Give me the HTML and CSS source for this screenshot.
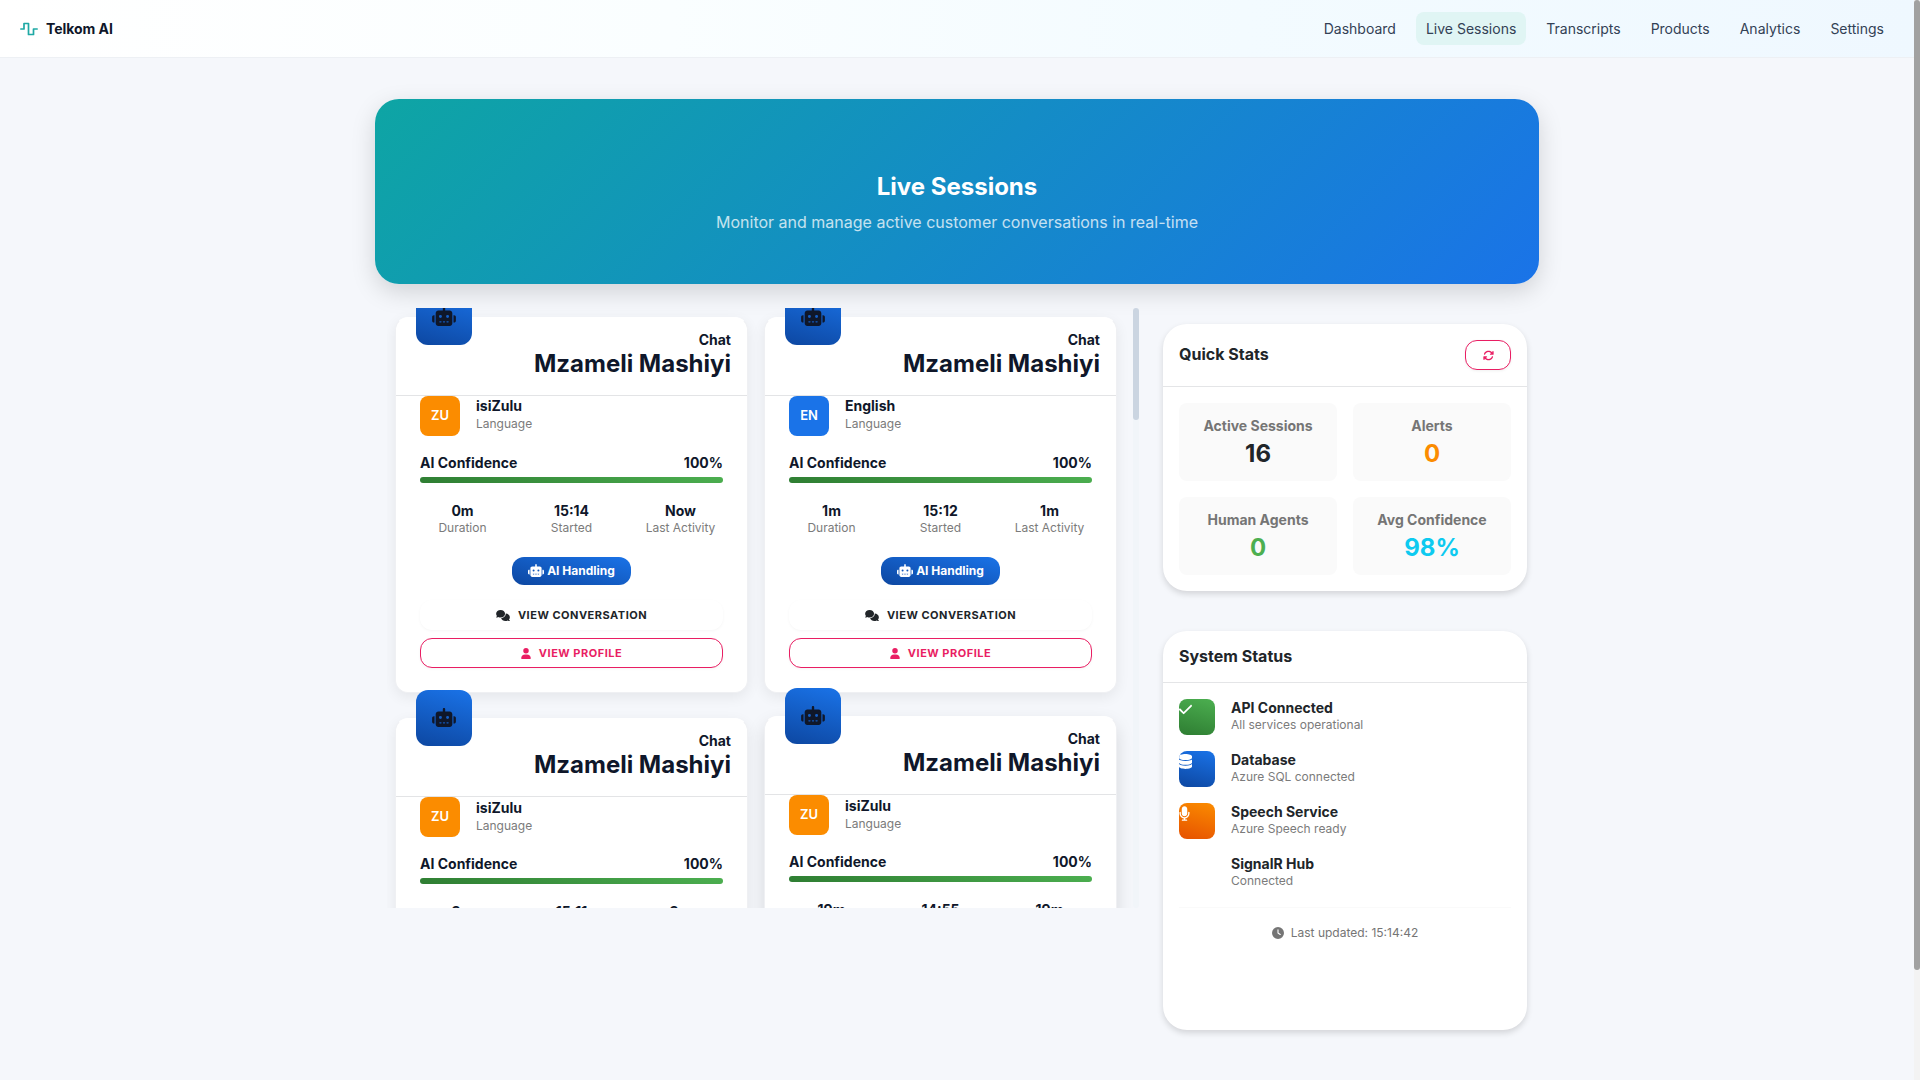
FILE: index.html
```html
<!DOCTYPE html>
<html lang="en">
<head>
<meta charset="utf-8">
<title>Telkom AI - Live Sessions</title>
<link rel="stylesheet" href="styles.css">
</head>
<body>
<svg class="sprite" aria-hidden="true">
  <symbol id="robot" viewBox="0 0 640 512"><path fill-rule="evenodd" d="M320 0c17.7 0 32 14.3 32 32V96H472c39.8 0 72 32.2 72 72V440c0 39.8-32.2 72-72 72H168c-39.8 0-72-32.2-72-72V168c0-39.8 32.2-72 72-72H288V32c0-17.7 14.3-32 32-32zM208 384c-8.8 0-16 7.2-16 16s7.2 16 16 16h32c8.8 0 16-7.2 16-16s-7.2-16-16-16H208zm96 0c-8.8 0-16 7.2-16 16s7.2 16 16 16h32c8.8 0 16-7.2 16-16s-7.2-16-16-16H304zm96 0c-8.8 0-16 7.2-16 16s7.2 16 16 16h32c8.8 0 16-7.2 16-16s-7.2-16-16-16H400zM264 256a40 40 0 1 0 -80 0 40 40 0 1 0 80 0zm152 40a40 40 0 1 0 0-80 40 40 0 1 0 0 80zM48 224H64V416H48c-26.5 0-48-21.5-48-48V272c0-26.5 21.5-48 48-48zm544 0c26.5 0 48 21.5 48 48v96c0 26.5-21.5 48-48 48H576V224h16z"/></symbol>
  <symbol id="comments" viewBox="0 0 640 512"><path d="M208 352c114.9 0 208-78.8 208-176S322.9 0 208 0S0 78.8 0 176c0 38.6 14.7 74.3 39.6 103.4c-3.5 9.4-8.7 17.7-14.2 24.7c-4.8 6.2-9.7 11-13.3 14.3c-1.8 1.6-3.3 2.9-4.3 3.7c-.5 .4-.9 .7-1.1 .8l-.2 .2C1 327.2-1.4 334.4 .8 340.9S9.1 352 16 352c21.8 0 43.8-5.6 62.1-12.5c9.2-3.5 17.8-7.4 25.3-11.4C134.1 343.3 169.8 352 208 352zM448 176c0 112.3-99.1 196.9-216.5 207C255.8 457.4 336.4 512 432 512c38.2 0 73.9-8.7 104.7-23.9c7.5 4 16 7.9 25.2 11.4c18.3 6.9 40.3 12.5 62.1 12.5c6.9 0 13.1-4.5 15.2-11.1c2.1-6.6-.2-13.8-5.8-17.9l-.2-.2c-.2-.2-.6-.4-1.1-.8c-1-.8-2.5-2-4.3-3.7c-3.6-3.3-8.5-8.1-13.3-14.3c-5.5-7-10.7-15.4-14.2-24.7c24.9-29 39.6-64.7 39.6-103.4c0-92.8-84.9-168.9-192.6-175.5c.4 5.1 .6 10.3 .6 15.5z"/></symbol>
  <symbol id="user" viewBox="0 0 448 512"><path d="M224 256A128 128 0 1 0 224 0a128 128 0 1 0 0 256zm-45.7 48C79.8 304 0 383.8 0 482.3C0 498.7 13.3 512 29.7 512H418.3c16.4 0 29.7-13.3 29.7-29.7C448 383.8 368.2 304 269.7 304H178.3z"/></symbol>
  <symbol id="check" viewBox="0 0 448 512"><path d="M438.6 105.4c12.5 12.5 12.5 32.8 0 45.3l-256 256c-12.5 12.5-32.8 12.5-45.3 0l-128-128c-12.5-12.5-12.5-32.8 0-45.3s32.8-12.5 45.3 0L160 338.7 393.4 105.4c12.5-12.5 32.8-12.5 45.3 0z"/></symbol>
  <symbol id="database" viewBox="0 0 448 512"><path d="M448 80v48c0 44.2-100.3 80-224 80S0 172.2 0 128V80C0 35.8 100.3 0 224 0S448 35.8 448 80zM393.2 214.7c20.8-7.4 39.9-16.9 54.8-28.6V288c0 44.2-100.3 80-224 80S0 332.2 0 288V186.1c14.9 11.8 34 21.2 54.8 28.6C99.7 230.7 159.5 240 224 240s124.3-9.3 169.2-25.3zM0 346.1c14.9 11.8 34 21.2 54.8 28.6C99.7 390.7 159.5 400 224 400s124.3-9.3 169.2-25.3c20.8-7.4 39.9-16.9 54.8-28.6V432c0 44.2-100.3 80-224 80S0 476.2 0 432V346.1z"/></symbol>
  <symbol id="mic" viewBox="0 0 384 512"><path d="M192 0C139 0 96 43 96 96V256c0 53 43 96 96 96s96-43 96-96V96c0-53-43-96-96-96zM64 216c0-13.3-10.7-24-24-24s-24 10.7-24 24v40c0 89.1 66.2 162.7 152 174.4V464H120c-13.3 0-24 10.7-24 24s10.7 24 24 24h72 72c13.3 0 24-10.7 24-24s-10.7-24-24-24H216V430.4c85.8-11.7 152-85.3 152-174.4V216c0-13.3-10.7-24-24-24s-24 10.7-24 24v40c0 70.7-57.3 128-128 128s-128-57.3-128-128V216z"/></symbol>
  <symbol id="clock" viewBox="0 0 512 512"><path fill-rule="evenodd" d="M256 0a256 256 0 1 1 0 512A256 256 0 1 1 256 0zM232 120V256c0 8 4 15.5 10.7 20l96 64c11 7.4 25.9 4.4 33.3-6.7s4.4-25.9-6.7-33.3L280 243.2V120c0-13.3-10.7-24-24-24s-24 10.7-24 24z"/></symbol>
  <symbol id="sync" viewBox="0 0 512 512"><path d="M105.1 202.6c7.7-21.8 20.2-42.3 37.8-59.8c62.5-62.5 163.8-62.5 226.3 0L386.3 160H352c-17.7 0-32 14.3-32 32s14.3 32 32 32H463.9c17.7 0 32-14.3 32-32V80c0-17.7-14.3-32-32-32s-32 14.3-32 32v35.2L414.4 97.6c-87.5-87.5-229.3-87.5-316.8 0C73.2 122 55.6 150.7 44.8 181.4c-5.9 16.7 2.9 34.9 19.5 40.8s34.9-2.9 40.8-19.5zM39 289.3c-5 1.5-9.8 4.2-13.7 8.2c-4 4-6.7 8.8-8.1 14c-.3 1.2-.6 2.5-.8 3.8c-.3 1.7-.4 3.4-.4 5.1V432c0 17.7 14.3 32 32 32s32-14.3 32-32V396.9l17.6 17.5c87.5 87.4 229.3 87.4 316.7 0c24.4-24.4 42.1-53.1 52.9-83.7c5.9-16.7-2.9-34.9-19.5-40.8s-34.9 2.9-40.8 19.5c-7.7 21.8-20.2 42.3-37.8 59.8c-62.5 62.5-163.8 62.5-226.3 0l-.1-.1L125.6 352H160c17.7 0 32-14.3 32-32s-14.3-32-32-32H48.4c-1.6 0-3.2 .1-4.8 .3s-3.1 .5-4.6 1z"/></symbol>
</svg>

<header class="topbar">
  <div class="brand">
    <svg class="logo" viewBox="0 0 18 14"><path d="M.8 7H4V1.500h4.500v11h5V7h3.700" fill="none" stroke="#1fa9a5" stroke-width="1.700" stroke-linejoin="round" stroke-linecap="round"/></svg>
    <span>Telkom AI</span>
  </div>
  <nav class="nav">
    <a>Dashboard</a><a class="active">Live Sessions</a><a>Transcripts</a><a>Products</a><a>Analytics</a><a>Settings</a>
  </nav>
</header>

<main class="page">
  <section class="hero">
    <h1>Live Sessions</h1>
    <p>Monitor and manage active customer conversations in real-time</p>
  </section>

  <div class="columns">
    <div class="list-wrap">
      <div class="list">
        <div class="list-col">
          <article class="card">
            <div class="card-head"><div class="avatar"><svg class="i-robot"><use href="#robot"/></svg></div><p>Chat</p><h4>Mzameli Mashiyi</h4></div>
            <div class="card-body">
              <div class="lang"><span class="code">ZU</span><div><h6>isiZulu</h6><small>Language</small></div></div>
              <div class="conf"><span>AI Confidence</span><span>100%</span></div>
              <div class="bar"></div>
              <div class="facts"><div><b>0m</b><small>Duration</small></div><div><b>15:14</b><small>Started</small></div><div><b>Now</b><small>Last Activity</small></div></div>
              <span class="pill"><svg class="i-pill"><use href="#robot"/></svg>AI Handling</span>
              <button class="btn"><svg class="i-comments"><use href="#comments"/></svg>View Conversation</button>
              <button class="btn outline"><svg class="i-user"><use href="#user"/></svg>View Profile</button>
            </div>
          </article>
          <article class="card next">
            <div class="card-head"><div class="avatar"><svg class="i-robot"><use href="#robot"/></svg></div><p>Chat</p><h4>Mzameli Mashiyi</h4></div>
            <div class="card-body">
              <div class="lang"><span class="code">ZU</span><div><h6>isiZulu</h6><small>Language</small></div></div>
              <div class="conf"><span>AI Confidence</span><span>100%</span></div>
              <div class="bar"></div>
              <div class="facts"><div><b>3m</b></div><div><b>15:11</b></div><div><b>3m</b></div></div>
            </div>
          </article>
        </div>
        <div class="list-col tight">
          <article class="card">
            <div class="card-head"><div class="avatar"><svg class="i-robot"><use href="#robot"/></svg></div><p>Chat</p><h4>Mzameli Mashiyi</h4></div>
            <div class="card-body">
              <div class="lang"><span class="code en">EN</span><div><h6>English</h6><small>Language</small></div></div>
              <div class="conf"><span>AI Confidence</span><span>100%</span></div>
              <div class="bar"></div>
              <div class="facts"><div><b>1m</b><small>Duration</small></div><div><b>15:12</b><small>Started</small></div><div><b>1m</b><small>Last Activity</small></div></div>
              <span class="pill"><svg class="i-pill"><use href="#robot"/></svg>AI Handling</span>
              <button class="btn"><svg class="i-comments"><use href="#comments"/></svg>View Conversation</button>
              <button class="btn outline"><svg class="i-user"><use href="#user"/></svg>View Profile</button>
            </div>
          </article>
          <article class="card next raised">
            <div class="card-head"><div class="avatar"><svg class="i-robot"><use href="#robot"/></svg></div><p>Chat</p><h4>Mzameli Mashiyi</h4></div>
            <div class="card-body">
              <div class="lang"><span class="code">ZU</span><div><h6>isiZulu</h6><small>Language</small></div></div>
              <div class="conf"><span>AI Confidence</span><span>100%</span></div>
              <div class="bar"></div>
              <div class="facts"><div><b>19m</b></div><div><b>14:55</b></div><div><b>19m</b></div></div>
            </div>
          </article>
        </div>
      </div>
      <div class="list-track"><div class="list-thumb"></div></div>
    </div>

    <aside class="side">
      <section class="panel">
        <div class="panel-head quick"><h5>Quick Stats</h5><button class="refresh"><svg class="i-sync"><use href="#sync"/></svg></button></div>
        <div class="stats">
          <div class="stat"><p>Active Sessions</p><strong>16</strong></div>
          <div class="stat"><p>Alerts</p><strong class="orange">0</strong></div>
          <div class="stat"><p>Human Agents</p><strong class="green">0</strong></div>
          <div class="stat"><p>Avg Confidence</p><strong class="cyan">98%</strong></div>
        </div>
      </section>
      <section class="panel status">
        <div class="panel-head"><h5>System Status</h5></div>
        <div class="services">
          <div class="service"><span class="box ok"><svg><use href="#check"/></svg></span><div><h6>API Connected</h6><small>All services operational</small></div></div>
          <div class="service"><span class="box db"><svg><use href="#database"/></svg></span><div><h6>Database</h6><small>Azure SQL connected</small></div></div>
          <div class="service"><span class="box speech"><svg class="i-mic"><use href="#mic"/></svg></span><div><h6>Speech Service</h6><small>Azure Speech ready</small></div></div>
          <div class="service"><span class="box"></span><div><h6>SignalR Hub</h6><small>Connected</small></div></div>
          <div class="updated"><svg class="i-clock"><use href="#clock"/></svg>Last updated: 15:14:42</div>
        </div>
      </section>
    </aside>
  </div>
</main>
<div class="page-track"><div class="page-thumb"></div></div>
</body>
</html>
```
FILE: styles.css
```css
* { box-sizing: border-box; margin: 0; padding: 0; }
html, body { height: 1080px; overflow: hidden; }
body { background: #f5f7fb; color: #0f172a; font-family: Inter, "Noto Sans", sans-serif; font-size: 14px; line-height: 21px; padding-right: 6px; }
svg { display: block; fill: currentColor; flex: none; }
.sprite { position: absolute; width: 0; height: 0; }
small { display: block; font-size: 12px; line-height: 18px; color: #7b7b7b; }
h6 { font-size: 14px; font-weight: 700; line-height: 18px; }
button { font-family: inherit; }

.topbar { height: 58px; padding: 0 20px; display: flex; align-items: center; justify-content: space-between; background: linear-gradient(90deg, #ffffff 0%, #fafeff 35%, #f3fbff 65%, #eff8ff 100%); border-bottom: 1px solid #edf0f4; }
.brand { display: flex; align-items: center; gap: 8px; font-weight: 700; letter-spacing: -.05px; }
.logo { width: 18px; height: 14px; }
.nav { display: flex; gap: 10px; }
.nav a { height: 33px; padding: 6px 10px; border-radius: 8px; color: #334155; }
.nav .active { background: #e0f5f4; }

.page { width: 1164px; margin: 41px auto 0; }
.hero { height: 185px; border-radius: 24px; background: linear-gradient(135deg, #0ea5a4, #1a73e8); box-shadow: 0 8px 24px rgba(0, 0, 0, .15); text-align: center; color: #fff; padding-top: 73px; }
.hero h1 { font-size: 24px; line-height: 30px; font-weight: 700; }
.hero p { font-size: 16px; line-height: 24px; margin-top: 8px; opacity: .75; }

.columns { display: flex; margin-top: 24px; padding: 0 12px; justify-content: space-between; align-items: flex-start; }
.list-wrap { display: flex; width: 752px; height: 600px; }
.list { flex: 1; height: 600px; overflow: hidden; display: flex; gap: 16px; padding: 9px 16px 0 8px; }
.list-track { width: 6px; background: #f1f5f9; border-radius: 3px; }
.list-thumb { height: 112px; background: #cbd5e1; border-radius: 3px; }
.list-col { width: 353px; display: flex; flex-direction: column; gap: 25px; }
.list-col.tight { gap: 23px; }

.card { position: relative; flex: none; height: 376px; background: #fff; border-radius: 13px; border: 1px solid #eff0f3; border-top-color: #fff; box-shadow: 0 4px 14px rgba(0, 0, 0, .07); }
.card.raised { box-shadow: 0 8px 18px rgba(0, 0, 0, .13); }
.card-head { height: 78px; padding: 11px 16px 0; text-align: right; border-bottom: 1px solid #e3e4e6; }
.card-head p { font-weight: 700; line-height: 21px; }
.card-head h4 { font-size: 24px; font-weight: 700; line-height: 28px; }
.avatar { position: absolute; left: 20px; top: -29px; width: 56px; height: 56px; border-radius: 12px; background: linear-gradient(195deg, #1a73e8, #0d47a1); display: flex; align-items: center; justify-content: center; padding-bottom: 1px; }
.i-robot { width: 24px; height: 19px; }
.card-body { padding: 0 24px; display: flex; flex-direction: column; }
.lang { display: flex; gap: 16px; height: 56px; }
.lang h6 { margin-top: 1px; }
.next .lang h6 { margin-top: 2px; }
.next .lang small { line-height: 17px; }
.code { width: 40px; height: 40px; border-radius: 8px; background: #fb8c00; color: #fff; font-weight: 600; font-size: 13px; line-height: 39px; text-align: center; }
.code.en { background: #1a73e8; }
.conf { display: flex; justify-content: space-between; font-weight: 700; height: 25px; }
.bar { height: 6px; border-radius: 3px; background: linear-gradient(195deg, #4caf50, #2e7d32); }
.facts { display: grid; grid-template-columns: 85px 1fr 85px; height: 74px; padding-top: 19px; text-align: center; }
.facts b { display: block; font-weight: 700; line-height: 18px; }
.facts small { line-height: 15px; }
.pill { align-self: center; width: 119px; height: 28px; border-radius: 12px; background: linear-gradient(195deg, #1a73e8, #0d47a1); color: #fff; font-size: 12px; font-weight: 700; padding-bottom: 1px; display: flex; align-items: center; justify-content: center; gap: 3px; }
.i-pill { width: 16px; height: 13px; }
.btn { height: 30px; margin-top: 15px; border: 0; border-radius: 12px; background: #fff; box-shadow: 0 1px 3px rgba(0, 0, 0, .04); color: #212529; font-size: 11px; font-weight: 700; letter-spacing: .5px; text-transform: uppercase; display: flex; align-items: center; justify-content: center; gap: 8px; }
.btn.outline { margin-top: 8px; border: 1px solid #e91e63; color: #e91e63; }
.i-comments { width: 14px; height: 11px; }
.i-user { width: 10px; height: 11px; }

.side { width: 364px; margin-top: 16px; display: flex; flex-direction: column; gap: 40px; color: #212529; }
.panel { height: 267px; background: #fff; border-radius: 24px; box-shadow: 0 3px 6px rgba(0, 0, 0, .14); }
.panel.status { height: 399px; }
.panel-head { height: 52px; padding: 13px 16px 0; border-bottom: 1px solid #e4e5e7; display: flex; justify-content: space-between; }
.panel-head.quick { height: 63px; padding-top: 16px; }
.panel h5 { font-size: 16px; font-weight: 700; line-height: 24px; }
.panel-head.quick h5 { line-height: 29px; }
.refresh { width: 46px; height: 30px; border: 1px solid #e91e63; border-radius: 12px; background: #fff; color: #e91e63; box-shadow: 0 1px 3px rgba(0, 0, 0, .06); display: flex; align-items: center; justify-content: center; }
.i-sync { width: 11px; height: 11px; }
.stats { display: grid; grid-template-columns: 1fr 1fr; gap: 16px; padding: 16px; }
.stat { height: 78px; background: #fafafa; border-radius: 8px; text-align: center; padding-top: 12px; }
.stat p { font-weight: 700; color: #757575; line-height: 22px; }
.stat strong { display: block; font-size: 24px; font-weight: 700; line-height: 34px; }
.orange { color: #fb8c00; }
.green { color: #4caf50; }
.cyan { color: #0dcaf0; }
.services { padding: 16px; display: flex; flex-direction: column; gap: 16px; }
.service { display: flex; gap: 16px; height: 36px; }
.service h6 { line-height: 18px; }
.service small { line-height: 16px; }
.box { width: 36px; height: 36px; border-radius: 8px; color: #fff; padding-top: 3px; overflow: hidden; }
.box svg { width: 13px; height: 15px; }
.box .i-mic { width: 11px; }
.ok { background: linear-gradient(195deg, #4caf50, #2e7d32); }
.db { background: linear-gradient(195deg, #1a73e8, #0d47a1); }
.speech { background: linear-gradient(195deg, #fb8c00, #e65100); }
.updated { border-top: 1px solid #fafafa; padding-top: 16px; display: flex; justify-content: center; align-items: center; gap: 7px; font-size: 12px; line-height: 18px; color: #757575; }
.i-clock { width: 12px; height: 12px; }

.page-track { position: fixed; top: 0; right: 0; width: 6px; height: 1080px; background: #f3f3f3; }
.page-thumb { height: 970px; background: #a1a1a1; border-radius: 3px; }
```
